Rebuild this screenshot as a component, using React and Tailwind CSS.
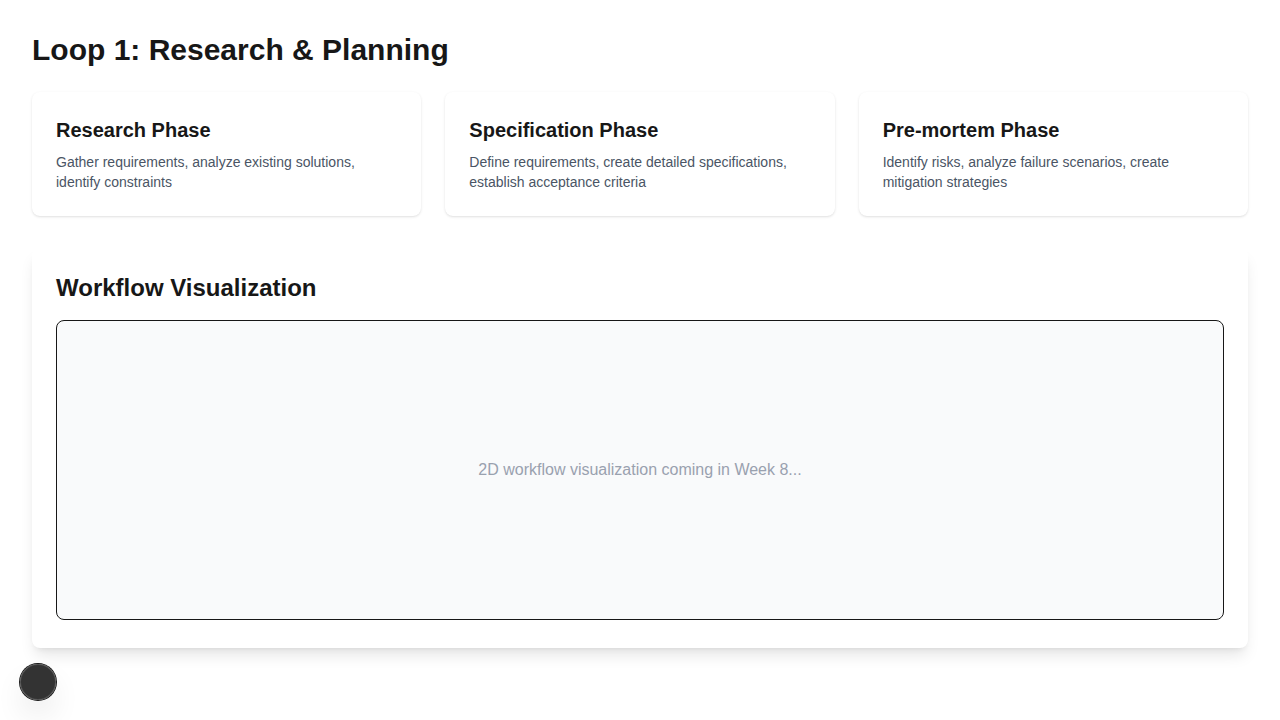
const phases = [
  {
    title: "Research Phase",
    text: "Gather requirements, analyze existing solutions, identify constraints",
  },
  {
    title: "Specification Phase",
    text: "Define requirements, create detailed specifications, establish acceptance criteria",
  },
  {
    title: "Pre-mortem Phase",
    text: "Identify risks, analyze failure scenarios, create mitigation strategies",
  },
];

function PhaseCard({ title, text }) {
  return (
    <section className="rounded-lg bg-white p-6 shadow-sm">
      <h2 className="mb-2 text-xl font-semibold">{title}</h2>
      <p className="text-sm text-gray-600">{text}</p>
    </section>
  );
}

export default function App() {
  return (
    <div className="min-h-screen bg-white font-['Liberation_Sans',Arial,sans-serif] text-[#171717]">
      <main className="p-8">
        <h1 className="mb-6 text-3xl font-bold">Loop 1: Research &amp; Planning</h1>
        <div className="mb-8 grid grid-cols-3 gap-6">
          {phases.map((phase) => (
            <PhaseCard key={phase.title} {...phase} />
          ))}
        </div>
        <section className="rounded-lg bg-white px-6 pt-6 pb-7 shadow-lg">
          <h2 className="mb-4 text-2xl font-semibold">Workflow Visualization</h2>
          <div className="flex h-[300px] items-center justify-center rounded-lg border border-[#171717] bg-gray-50">
            <p className="text-gray-400">2D workflow visualization coming in Week 8...</p>
          </div>
        </section>
      </main>
      <button
        type="button"
        aria-label="Open tools"
        className="fixed bottom-5 left-5 size-9 rounded-full bg-black/80 shadow-[0_0_0_1px_#171717,inset_0_0_0_1px_rgba(255,255,255,0.14),0_16px_32px_-8px_rgba(0,0,0,0.24)]"
      />
    </div>
  );
}
